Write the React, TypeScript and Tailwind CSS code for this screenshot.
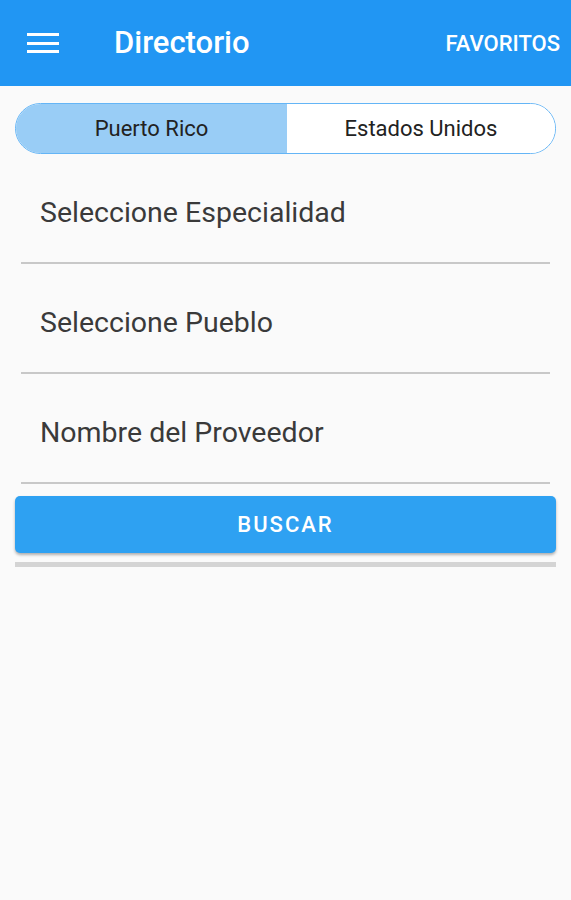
import { useState } from "react";

const fields = ["Seleccione Especialidad", "Seleccione Pueblo", "Nombre del Proveedor"];

export default function App() {
  const [region, setRegion] = useState<"pr" | "us">("pr");

  return (
    <div className="min-h-[900px] bg-[#fafafa] font-['Roboto',sans-serif]">
      <header className="flex h-[86px] items-center bg-[#2196f3] pl-[27px] pr-[11px] text-white">
        <button type="button" className="flex w-[32px] flex-col gap-[5.5px]">
          <span className="h-[3px] w-full bg-white" />
          <span className="h-[3px] w-full bg-white" />
          <span className="h-[3px] w-full bg-white" />
        </button>
        <h1 className="ml-[55px] text-[31px] font-medium">Directorio</h1>
        <span className="ml-auto text-[22px] font-medium">FAVORITOS</span>
      </header>

      <div className="px-[15px] pt-[17px]">
        <div className="flex h-[51px] overflow-hidden rounded-full border-[1.5px] border-[#64b5f6] bg-white">
          <button
            type="button"
            onClick={() => setRegion("pr")}
            className={
              "w-[271px] text-[22px] text-[#222] " + (region === "pr" ? "bg-[#99cdf6]" : "bg-white")
            }
          >
            Puerto Rico
          </button>
          <button
            type="button"
            onClick={() => setRegion("us")}
            className={"flex-1 text-[22px] text-[#222] " + (region === "us" ? "bg-[#99cdf6]" : "bg-white")}
          >
            Estados Unidos
          </button>
        </div>
      </div>

      <div className="px-[21px]">
        {fields.map((f) => (
          <div key={f} className="flex h-[110px] items-center border-b-2 border-[#c8c8c8] pl-[19px] pt-[10px]">
            <span className="text-[28.5px] text-[#3a3a3a]">{f}</span>
          </div>
        ))}
      </div>

      <div className="px-[15px] pt-[12px]">
        <button
          type="button"
          className="h-[57px] w-full rounded-[5px] bg-[#2ea1f2] text-[22px] font-medium tracking-[2px] text-white shadow-[0_2px_3px_rgba(0,0,0,0.3)]"
        >
          BUSCAR
        </button>
        <div className="mt-[9px] h-[5px] bg-[#d4d4d4]" />
      </div>
    </div>
  );
}
